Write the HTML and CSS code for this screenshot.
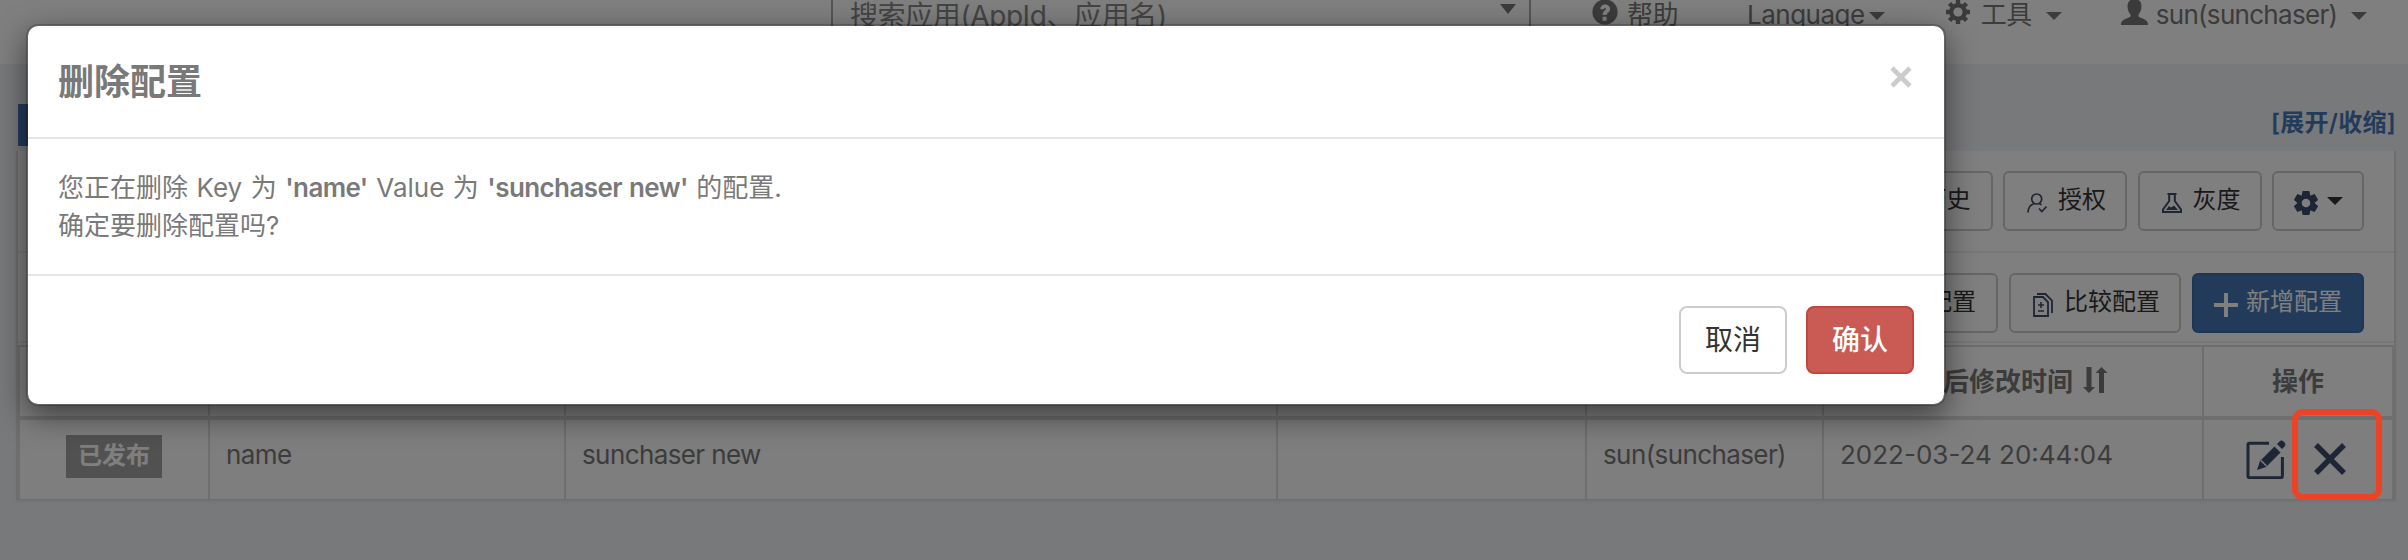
FILE: index.html
```html
<!DOCTYPE html>
<html lang="zh">
<head>
<meta charset="utf-8">
<title>删除配置</title>
<link rel="stylesheet" href="styles.css">
</head>
<body>
<header class="topbar">
  <div class="search"><span>搜索应用(AppId、应用名)</span><i class="tri"></i></div>
  <div class="nav help"><svg width="26" height="26" viewBox="0 0 26 26"><circle cx="13" cy="13" r="12.6" fill="#777"/><path d="M8.3 10.3C8.3 3.6 18 4 18 10c0 3.7-3.4 3.8-3.4 6h-4c0-4 3.2-4.200 3.200-6.200 0-1.500-1.800-1.400-1.800.5zM10.600 17.800h4v4h-4z" fill="#fff"/></svg><span>帮助</span></div>
  <div class="nav lang"><span>Language</span><i class="caret"></i></div>
  <div class="nav tools"><svg width="26" height="26" viewBox="0 0 26 26"><g fill="#777"><path d="M10.800 1h4.400v24h-4.400zM1 10.800h24v4.400H1z"/><path d="M10.800 1h4.400v24h-4.400zM1 10.800h24v4.400H1z" transform="rotate(45 13 13)"/><circle cx="13" cy="13" r="9"/></g><circle cx="13" cy="13" r="4.600" fill="#fff"/></svg><span>工具</span><i class="caret"></i></div>
  <div class="nav user"><svg width="27" height="26" viewBox="0 0 27 26"><path d="M13.500 0c4.500 0 7 3 7 7.500 0 4-1.500 6-3 8v2c3 2 9.500 3 9.500 7.500v1H0v-1c0-4.500 6.500-5.500 9.500-7.500v-2c-1.500-2-3-4-3-8C6.500 3 9 0 13.500 0z" fill="#777"/></svg><span>sun(sunchaser)</span><i class="caret"></i></div>
</header>
<main class="page">
  <div class="tabs"><span class="tab"></span><a class="toggle">[展开/收缩]</a></div>
  <section class="panel">
    <div class="bar first">
      <div class="btn history"><span>发布历史</span></div>
      <div class="btn auth"><svg width="20" height="20" viewBox="0 0 20 20" fill="none" stroke="#3c4a68" stroke-width="1.700"><circle cx="9.700" cy="6" r="5"/><path d="M1 19.500c0-4 2-7.500 6-8.700M12.500 10.700l2 1M12 15.500l2.800 3 4.700-5"/></svg><span>授权</span></div>
      <div class="btn gray"><svg width="20" height="20" viewBox="0 0 20 20" fill="none" stroke="#3c4a68" stroke-width="2"><path d="M5.500 1h9M7.200 1v7L1 16.500V19h18v-2.500L12.800 8V1"/><path d="M4 17l3-4 2 1.500 3-2 4 4.500z" fill="#3c4a68" stroke="none"/></svg><span>灰度</span></div>
      <div class="btn gear"><svg width="24" height="24" viewBox="0 0 24 24"><g fill="#3c4a68"><path d="M8.600 0h6.800l1 5v14l-1 5H8.600l-1-5V5z"/><path d="M8.600 0h6.800l1 5v14l-1 5H8.600l-1-5V5z" transform="rotate(60 12 12)"/><path d="M8.600 0h6.800l1 5v14l-1 5H8.600l-1-5V5z" transform="rotate(120 12 12)"/></g><circle cx="12" cy="12" r="4.300" fill="#fff"/></svg><i class="caret"></i></div>
    </div>
    <div class="bar second">
      <div class="btn sync"><span>同步配置</span></div>
      <div class="btn diff"><svg width="20" height="24" viewBox="0 0 20 24" fill="none" stroke="#3c4a68" stroke-width="1.800"><path d="M1 4h9l5 5v14H1z"/><path d="M4 1h8.500L19 7.500V20"/><path d="M8 9v6M5 12h6M5 18h6" stroke-width="1.600"/></svg><span>比较配置</span></div>
      <div class="btn add"><svg width="24" height="24" viewBox="0 0 24 24"><path d="M10 0h4v10h10v4H14v10h-4V14H0v-4h10z" fill="#fff"/></svg><span>新增配置</span></div>
    </div>
    <div class="table">
      <div class="row head"><div></div><div></div><div></div><div></div><div></div>
        <div class="time"><span>最后修改时间</span><svg width="25" height="26" viewBox="0 0 25 26"><path d="M3.500 0h5v20h3.500l-6 6-6-6h3.500zM16 26h5V6h3.500l-6-6-6 6H16z" fill="#777"/></svg></div>
        <div class="op">操作</div></div>
      <div class="row"><div class="state"><span class="badge">已发布</span></div><div>name</div><div>sunchaser new</div><div></div><div>sun(sunchaser)</div><div class="date">2022-03-24 20:44:04</div>
        <div class="acts"><svg width="40" height="40" viewBox="0 0 40 40"><path d="M23 4.300H3.500q-1.500 0-1.500 1.500v31.400q0 1.500 1.500 1.500h31.400q1.500 0 1.500-1.500V18" fill="none" stroke="#3c4a68" stroke-width="3"/><path d="M11 31l3-9L28.500 7.500l6 6L20 28z" fill="#3c4a68"/><path d="M31 5l2.500-2.500q2-2 4.500.5t.5 4.500L36 10z" fill="#3c4a68"/><path d="M15 21.500l5.500 5.500" stroke="#fff" stroke-width="1.500"/></svg><svg class="del" width="32" height="32" viewBox="0 0 32 32"><path d="M2 2l28 28M30 2L2 30" stroke="#3c4a68" stroke-width="5.500"/></svg></div></div>
    </div>
  </section>
</main>
<div class="backdrop"></div>
<div class="mark"></div>
<div class="modal">
  <div class="m-head"><h4>删除配置</h4><svg width="22" height="22" viewBox="0 0 22 22"><path d="M2 2l18 18M20 2L2 20" stroke="#ccc" stroke-width="4.600"/></svg></div>
  <div class="m-body"><p class="l1">您正在删除 Key 为 <b>'name'</b> Value 为 <b>'sunchaser new'</b> 的配置.</p><p>确定要删除配置吗?</p></div>
  <div class="m-foot"><div class="mbtn">取消</div><div class="mbtn danger">确认</div></div>
</div>
</body>
</html>
```
FILE: styles.css
```css
* { box-sizing: border-box; }
body { margin: 0; width: 2408px; height: 560px; overflow: hidden; position: relative; background: #f1f2f7; color: #797979; font: 26px/38px Inter, "Noto Sans CJK SC", sans-serif; letter-spacing: -0.5px; }
svg { display: block; flex: none; }
p, h4 { margin: 0; }
.topbar { height: 64px; background: #fff; display: flex; align-items: flex-start; white-space: nowrap; }
.search { margin-left: 831px; width: 700px; height: 50px; margin-top: -16px; padding: 11px 13px 0 17px; border: 2px solid #aaa; display: flex; justify-content: space-between; font-size: 28px; color: #888; letter-spacing: -0.4px; }
.tri { border: 8px solid transparent; border-top: 10px solid #777; border-bottom: 0; height: 10px; margin-top: 7px; }
.nav { display: flex; margin-top: -4px; }
.nav svg { margin-top: 3px; }
.help { margin-left: 61px; gap: 9px; }
.lang { margin-left: 69px; gap: 4px; }
.tools { margin-left: 60px; gap: 10px; }
.user { margin-left: 59px; gap: 8px; letter-spacing: -0.7px; }
.caret { border: 8px solid transparent; border-top-color: currentColor; border-bottom: 0; height: 8px; margin-top: 16px; }
.tools .caret { margin-left: 4px; }
.user .caret { margin-left: 6px; }
.page { padding: 40px 12px 0 18px; }
.tabs { height: 47px; display: flex; justify-content: space-between; }
.tab { width: 300px; height: 42px; background: #4676b4; }
.toggle { color: #4676b4; font-weight: 600; font-size: 24px; letter-spacing: 0.3px; }
.panel { width: 2380px; margin-left: -2px; height: 349px; background: #fff; border: 2px solid #ddd; border-top: 0; box-shadow: 0 2px 2px rgba(0,0,0,.05); }
.bar { display: flex; justify-content: flex-end; border-bottom: 2px solid #eee; padding-right: 30px; }
.first { height: 102px; padding-top: 20px; gap: 10.5px; }
.second { height: 90px; padding-top: 20px; gap: 11px; margin-bottom: 2px; }
.btn { height: 60px; border: 2px solid #ccc; border-radius: 6px; display: flex; align-items: center; font-size: 24px; letter-spacing: 0; color: #333; }
.btn span { position: relative; top: -1px; }
.history, .sync { width: 180px; justify-content: flex-end; padding-right: 20px; }
.auth, .gray { width: 124px; padding-left: 22px; gap: 11px; }
.gear { width: 92px; padding-left: 20px; gap: 9px; }
.gear .caret { margin-top: 0; }
.diff { width: 172px; padding-left: 22px; gap: 11px; }
.add { width: 172px; padding-left: 20px; gap: 8px; background: #4676b4; border-color: #3c6cab; color: #fff; }
.diff svg, .add svg { margin-top: 4px; }
.auth svg, .gray svg, .gear svg { margin-top: 3px; }
.table { border: 2px solid #ddd; height: 155px; }
.row { display: grid; grid-template-columns: 190px 356px 712px 309px 237px 380px 188px; height: 79px; background: #fcfcfc; }
.row.head { height: 73px; border-bottom: 4px solid #ddd; font-weight: 600; background: #fff; }
.row > div { border-right: 2px solid #ddd; padding: 16px 0 0 16px; white-space: nowrap; letter-spacing: -0.6px; }
.row > div:last-child { border-right: 0; }
.row > .state { padding: 15px 0 0 46px; }
.badge { display: block; width: 96px; height: 43px; line-height: 41px; background: #a3a3a3; color: #fff; font-size: 24px; font-weight: 600; text-align: center; letter-spacing: 0; }
.row > .time { display: flex; gap: 10px; padding-left: 93px; letter-spacing: 0; }
.time svg { margin-top: 4px; }
.row > .op { padding-left: 68px; letter-spacing: 0; }
.row > .date { letter-spacing: 0; font-feature-settings: "case"; }
.row > .acts { display: flex; padding: 19px 0 0 42px; gap: 28px; }
.del { margin-top: 4px; }
.backdrop { position: absolute; inset: 0; background: rgba(0,0,0,.5); }
.mark { position: absolute; left: 2292px; top: 409px; width: 90px; height: 91px; border: 6px solid #ee4226; border-radius: 11px; }
.modal { position: absolute; left: 26px; top: 24px; width: 1920px; height: 382px; border: 2px solid rgba(0,0,0,.2); border-radius: 12px; background: #fff; background-clip: padding-box; box-shadow: 0 10px 30px rgba(0,0,0,.5); }
.m-head { height: 113px; border-bottom: 2px solid #e5e5e5; display: flex; justify-content: space-between; padding: 30px 32px 0 30px; }
.m-head h4 { font-size: 36px; line-height: 52px; font-weight: 700; letter-spacing: 0; }
.m-head svg { margin-top: 10px; }
.m-body { height: 137px; border-bottom: 2px solid #e5e5e5; padding: 30px; letter-spacing: 0; word-spacing: 1.2px; }
.m-body b { font-weight: 600; letter-spacing: -0.6px; }
.m-foot { display: flex; justify-content: flex-end; gap: 19px; padding: 30px 30px 0; }
.mbtn { width: 108px; height: 68px; border: 2px solid #ccc; border-radius: 8px; font-size: 28px; line-height: 64px; text-align: center; color: #333; letter-spacing: 0; }
.danger { background: #c95b54; border-color: #c3453d; color: #fff; font-weight: 500; }
```
